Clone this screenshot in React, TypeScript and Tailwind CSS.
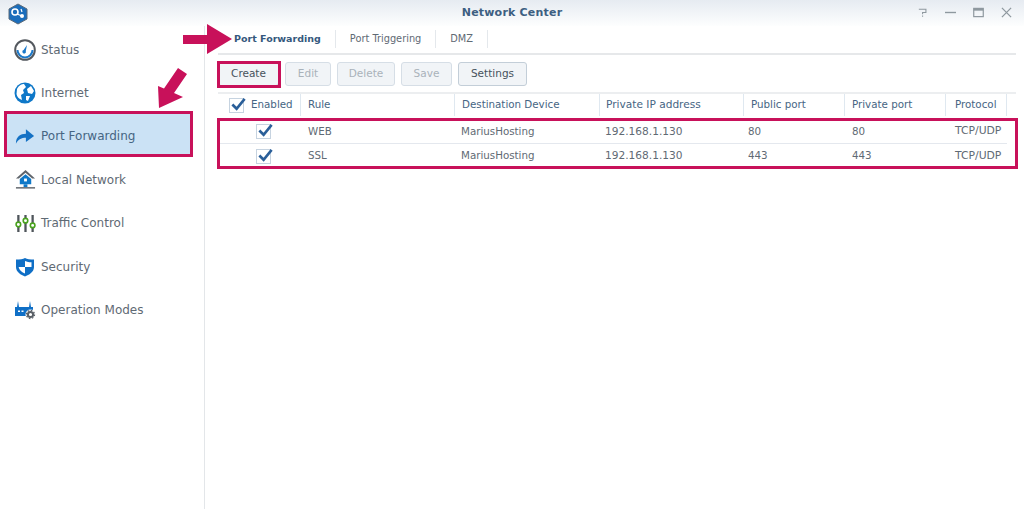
import React from "react";

const font = { fontFamily: '"DejaVu Sans", sans-serif' };

function Check({ className = "" }: { className?: string }) {
  return (
    <span className={`relative block w-[15px] h-[15px] border border-[#c6d3e0] bg-white ${className}`}>
      <svg viewBox="0 0 18 16" className="absolute left-[0px] top-[-3px] w-[17px] h-[16px]">
        <path d="M2.5 8.5 L7 13 L15.5 2.5" fill="none" stroke="#2a5f99" strokeWidth="2.8" />
      </svg>
    </span>
  );
}

const icons: Record<string, React.ReactNode> = {
  Status: (
    <svg viewBox="0 0 22 22" className="w-[22px] h-[22px]">
      <circle cx="11" cy="11" r="9.8" fill="#fff" stroke="#53585e" strokeWidth="2" />
      <path d="M3.5 11a7.5 7.5 0 0 0 15 0" fill="none" stroke="#1b78c9" strokeWidth="2" />
      <path d="M13 6 L11.8 12 A1.8 1.8 0 1 1 9.6 11 Z" fill="#1b78c9" />
    </svg>
  ),
  Internet: (
    <svg viewBox="0 0 22 22" className="w-[22px] h-[22px]">
      <circle cx="11" cy="11" r="10.5" fill="#0f78c8" />
      <path d="M3 7 C5 3 8 2 10 2 L12 5 L9 8 L10 11 L7 13 L8 18 C5 17 3 15 2.5 12 Z M13 7 L17 4 L20 9 L18 12 L14 11 Z M12 14 L16 14 L14 19 L12 18 Z" fill="#fff" />
    </svg>
  ),
  "Port Forwarding": (
    <svg viewBox="0 0 22 18" className="w-[20px] h-[17px]">
      <path d="M1 17 C1 9 6 6 12 6 V1 L21 8.5 L12 15 V10.5 C7 10.5 4 12 1 17 Z" fill="#1471c4" />
    </svg>
  ),
  "Local Network": (
    <svg viewBox="0 0 22 22" className="w-[21px] h-[21px]">
      <path d="M11 1 L21 10 H18 L11 4 L4 10 H1 Z" fill="#60656b" />
      <path d="M11 5.5 L17 10.5 V16 H5 V10.5 Z" fill="#0f78c8" />
      <rect x="9.5" y="10" width="3" height="3" fill="#fff" />
      <rect x="9" y="16" width="4" height="3" fill="#0f78c8" />
      <rect x="1" y="19" width="20" height="1.5" fill="#60656b" />
    </svg>
  ),
  "Traffic Control": (
    <svg viewBox="0 0 22 20" className="w-[21px] h-[19px]">
      <path d="M3.5 1 V19 M11 1 V19 M18.5 1 V19" stroke="#4f555b" strokeWidth="2.4" />
      <circle cx="3.5" cy="11" r="2.4" fill="#fff" stroke="#4aa31f" strokeWidth="1.7" />
      <circle cx="11" cy="7" r="2.4" fill="#fff" stroke="#4aa31f" strokeWidth="1.7" />
      <circle cx="18.5" cy="12" r="2.4" fill="#fff" stroke="#4aa31f" strokeWidth="1.7" />
    </svg>
  ),
  Security: (
    <svg viewBox="0 0 20 20" className="w-[20px] h-[20px]">
      <path d="M1 2.5 C5 2.5 8 2 10 1 C12 2 15 2.5 19 2.5 V10 C19 15 14 18 10 19.5 C6 18 1 15 1 10 Z" fill="#0f6fc6" />
      <path d="M10 4 C12 5 14 5.3 16.5 5.3 V10 H10 Z M10 10 V16.5 C7 15.2 4.2 13.5 3.6 10 Z" fill="#fff" />
    </svg>
  ),
  "Operation Modes": (
    <svg viewBox="0 0 22 20" className="w-[22px] h-[20px]">
      <path d="M4 1 L5 7 H15 L16 1 L17 7 H19 V16 H1 V7 H3 Z" fill="#0f6fc6" />
      <rect x="4" y="10.5" width="2" height="1.5" fill="#fff" />
      <rect x="7.5" y="10.5" width="2" height="1.5" fill="#fff" />
      <circle cx="16.5" cy="14.5" r="5" fill="#fff" />
      <circle cx="16.5" cy="14.5" r="2.6" fill="none" stroke="#5a6067" strokeWidth="2" />
      <circle cx="16.5" cy="14.5" r="4" fill="none" stroke="#5a6067" strokeWidth="1.3" strokeDasharray="1.6 1.5" />
    </svg>
  ),
};

const nav = ["Status", "Internet", "Port Forwarding", "Local Network", "Traffic Control", "Security", "Operation Modes"];

const cols = [
  { label: "Rule", w: "w-[154px]", hp: "pl-[7px]", bp: "pl-[7px]", hs: "", bs: "" },
  { label: "Destination Device", w: "w-[145px]", hp: "pl-[7px]", bp: "pl-[6px]", hs: "", bs: "" },
  { label: "Private IP address", w: "w-[144px]", hp: "pl-[6px]", bp: "pl-[5px]", hs: "text-[10.6px]", bs: "text-[10.6px]" },
  { label: "Public port", w: "w-[101px]", hp: "pl-[7px]", bp: "pl-[4px]", hs: "", bs: "" },
  { label: "Private port", w: "w-[101px]", hp: "pl-[7px]", bp: "pl-[7px]", hs: "", bs: "" },
  { label: "Protocol", w: "w-[61px]", hp: "pl-[9px]", bp: "pl-[9px]", hs: "", bs: "text-[10.8px]" },
];

const rows = [
  ["WEB", "MariusHosting", "192.168.1.130", "80", "80", "TCP/UDP"],
  ["SSL", "MariusHosting", "192.168.1.130", "443", "443", "TCP/UDP"],
];

function Btn({ label, on, w }: { label: string; on?: boolean; w: string }) {
  return (
    <div
      className={`${w} h-[24px] rounded-[3px] border flex items-center justify-center text-[10.5px] bg-[#f1f4f7] ${
        on ? "border-[#c3ced8] text-[#46525d]" : "border-[#d6dee6] text-[#a9b2ba]"
      }`}
    >
      {label}
    </div>
  );
}

export default function App() {
  return (
    <div className="relative w-[1024px] h-[509px] overflow-hidden bg-white" style={font}>
      <div className="relative h-[26px] bg-gradient-to-b from-[#e6ebf1] to-[#fdfefe] flex items-center justify-center">
        <svg viewBox="0 0 20 22" className="absolute left-[8px] top-[3px] w-[20px] h-[22px]">
          <path d="M10 1 L19 6 V16 L10 21 L1 16 V6 Z" fill="#1a6dbb" stroke="#5a6a7a" strokeWidth="1" />
          <circle cx="7" cy="9" r="3" fill="none" stroke="#fff" strokeWidth="1.6" />
          <circle cx="14" cy="13" r="2" fill="#fff" />
          <path d="M9 11 L14 13 M13 6 L14 9" stroke="#fff" strokeWidth="1.2" />
        </svg>
        <span className="text-[11px] font-bold tracking-[0.2px] text-[#3d5f82]">Network Center</span>
        <div className="absolute right-[12px] top-[7px] flex items-center gap-[17px] text-[#8e989f]">
          <svg viewBox="0 0 12 12" className="w-[10px] h-[11px]"><path d="M1 2 H9.5 V6 H5.5 V8 M5.5 9.5 V11" fill="none" stroke="currentColor" strokeWidth="1.3" /></svg>
          <svg viewBox="0 0 12 12" className="w-[11px] h-[11px]"><path d="M0 6 H12" stroke="currentColor" strokeWidth="1.5" /></svg>
          <svg viewBox="0 0 12 12" className="w-[11px] h-[11px]"><rect x="0.8" y="1.5" width="10.4" height="9" fill="none" stroke="currentColor" strokeWidth="1.3" /><rect x="0.8" y="1.5" width="10.4" height="2.5" fill="currentColor" /></svg>
          <svg viewBox="0 0 12 12" className="w-[11px] h-[11px]"><path d="M1 1 L11 11 M11 1 L1 11" stroke="currentColor" strokeWidth="1.4" /></svg>
        </div>
      </div>

      <div className="flex h-[483px]">
        <aside className="w-[205px] shrink-0 border-r border-[#e3e6e9] pt-[2px] pl-[5px] pr-[12px]">
          {nav.map((n) => (
            <div
              key={n}
              className={`relative h-[43.4px] flex items-center text-[12px] pl-[9px] gap-[5px] ${
                n === "Port Forwarding" ? "text-[#466583]" : "text-[#5f6a74]"
              }`}
            >
              {n === "Port Forwarding" && (
                <div className="absolute left-[-1px] top-[-4px] w-[189px] h-[46px] bg-[#cbe2f5] border-[3px] border-[#c8115a]" />
              )}
              <span className="relative w-[22px] h-[22px] flex items-center justify-center shrink-0">{icons[n]}</span>
              <span className="relative">{n}</span>
            </div>
          ))}
        </aside>

        <main className="flex-1 pl-[13px] pr-[8px] min-w-0">
          <div className="relative h-[29px] border-b-2 border-[#e6e8ea] flex items-start pt-[4px]">
            <div className="h-[18px] pl-[16px] pr-[14px] flex items-center border-r border-[#e4e8ec] text-[9.5px] font-bold text-[#35587d]">Port Forwarding</div>
            <div className="h-[18px] px-[14px] flex items-center border-r border-[#e4e8ec] text-[9.8px] text-[#5f6a74]">Port Triggering</div>
            <div className="h-[18px] px-[14px] flex items-center border-r border-[#e4e8ec] text-[9.8px] text-[#5f6a74]">DMZ</div>
          </div>

          <div className="flex gap-[6px] mt-[7px] h-[24px]">
            <Btn label="Create" on w="w-[61px]" />
            <Btn label="Edit" w="w-[46px]" />
            <Btn label="Delete" w="w-[58px]" />
            <Btn label="Save" w="w-[51px]" />
            <Btn label="Settings" on w="w-[69px]" />
          </div>

          <div className="mt-[6px] border-t-2 border-[#eceef0] h-[24px] flex items-center text-[10.3px] text-[#466583]">
            <div className="w-[83px] h-[22px] flex items-center pl-[11px] gap-[7px] border-r border-[#dfe8f0]">
              <Check />
              <span>Enabled</span>
            </div>
            {cols.map((c) => (
              <div key={c.label} className={`${c.w} ${c.hp} ${c.hs} h-[22px] flex items-center border-r border-[#dfe8f0]`}>
                {c.label}
              </div>
            ))}
          </div>

          <div className="mt-[4px] w-[789px] text-[10.3px] text-[#5f6a74]">
            {rows.map((r) => (
              <div key={r[0]} className="h-[24px] flex items-center border-b border-[#e4e8ee] last:border-b-0">
                <div className="w-[83px] pl-[38px]"><Check /></div>
                {r.map((c, i) => (
                  <div key={i} className={`${cols[i].w} ${cols[i].bp} ${cols[i].bs}`}>{c}</div>
                ))}
              </div>
            ))}
          </div>
        </main>
      </div>

      {/* annotations */}
      <div className="absolute left-[217px] top-[61px] w-[64px] h-[27px] border-[3px] border-[#c8115a]" />
      <div className="absolute left-[217px] top-[118px] w-[801px] h-[51px] border-[3px] border-[#c8115a]" />
      <svg viewBox="0 0 49 30" className="absolute left-[183px] top-[24px] w-[49px] h-[30px]">
        <path d="M0 11 H24 V0 L49 15 L24 30 V20 H0 Z" fill="#c8115a" />
      </svg>
      <svg viewBox="0 0 30 41" className="absolute left-[158px] top-[68px] w-[30px] h-[41px]">
        <path d="M20 0 L29 6 L16 25 L25 29 L1 40 L0 18 L6 20.5 Z" fill="#c8115a" />
      </svg>
    </div>
  );
}
